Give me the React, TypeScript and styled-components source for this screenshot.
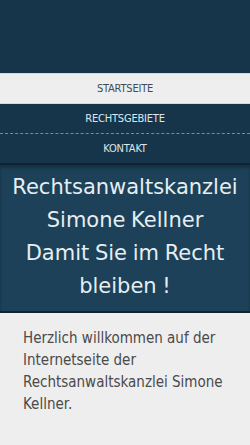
import styled, { createGlobalStyle } from 'styled-components';

const GlobalStyle = createGlobalStyle`
  html, body {
    margin: 0;
    padding: 0;
    background: #eeeeee;
  }
  body {
    font-family: 'DejaVu Sans', 'Noto Sans', sans-serif;
  }
`;

const navItems = [
  { label: 'STARTSEITE', active: true },
  { label: 'RECHTSGEBIETE', active: false },
  { label: 'KONTAKT', active: false },
];

export default function App() {
  return (
    <>
      <GlobalStyle />
      <Page>
        <TopBar />
        <Nav>
          {navItems.map((item, i) => (
            <NavItem key={item.label} $active={item.active} $dashed={i === 1}>
              {item.label}
            </NavItem>
          ))}
        </Nav>
        <Hero>
          <HeroTitle>
            Rechtsanwaltskanzlei
            <br />
            Simone Kellner
            <br />
            Damit Sie im Recht
            <br />
            bleiben !
          </HeroTitle>
        </Hero>
        <Content>
          <Intro>
            Herzlich willkommen auf der Internetseite der Rechtsanwaltskanzlei Simone Kellner.
          </Intro>
        </Content>
      </Page>
    </>
  );
}

const Page = styled.div`
  width: 250px;
  min-height: 445px;
  display: flex;
  flex-direction: column;
  background: #eeeeee;
`;

const TopBar = styled.div`
  height: 73px;
  background: #17354a;
`;

const Nav = styled.nav`
  display: flex;
  flex-direction: column;
  background: #17354a;
`;

const NavItem = styled.div<{ $active: boolean; $dashed: boolean }>`
  height: 29px;
  display: flex;
  align-items: center;
  justify-content: center;
  font-family: 'DejaVu Sans Condensed', 'DejaVu Sans', sans-serif;
  font-size: 11px;
  letter-spacing: -0.2px;
  color: ${(p) => (p.$active ? '#3d4c57' : '#dce6ec')};
  background: ${(p) => (p.$active ? '#eeeeee' : '#17354a')};
  border-top: ${(p) => (p.$active ? '1px solid #c9dde8' : 'none')};
  border-bottom: ${(p) =>
    p.$active ? '1px solid #c9dde8' : p.$dashed ? '1px dashed #6f8ea0' : 'none'};
`;

const Hero = styled.div`
  background: #1c4158;
  border-top: 2px solid #0f2433;
  border-bottom: 2px solid #0f2433;
  padding: 6px 6px 8px;
  box-shadow: inset 0 3px 3px rgba(0, 0, 0, 0.25);
`;

const HeroTitle = styled.h1`
  margin: 0;
  font-weight: normal;
  font-size: 21px;
  line-height: 33px;
  word-spacing: -1px;
  text-align: center;
  color: #e6eef2;
`;

const Content = styled.div`
  padding: 14px 23px;
`;

const Intro = styled.p`
  margin: 0;
  font-family: 'DejaVu Sans Condensed', 'DejaVu Sans', sans-serif;
  font-size: 15px;
  line-height: 22px;
  color: #4a4a4a;
`;
